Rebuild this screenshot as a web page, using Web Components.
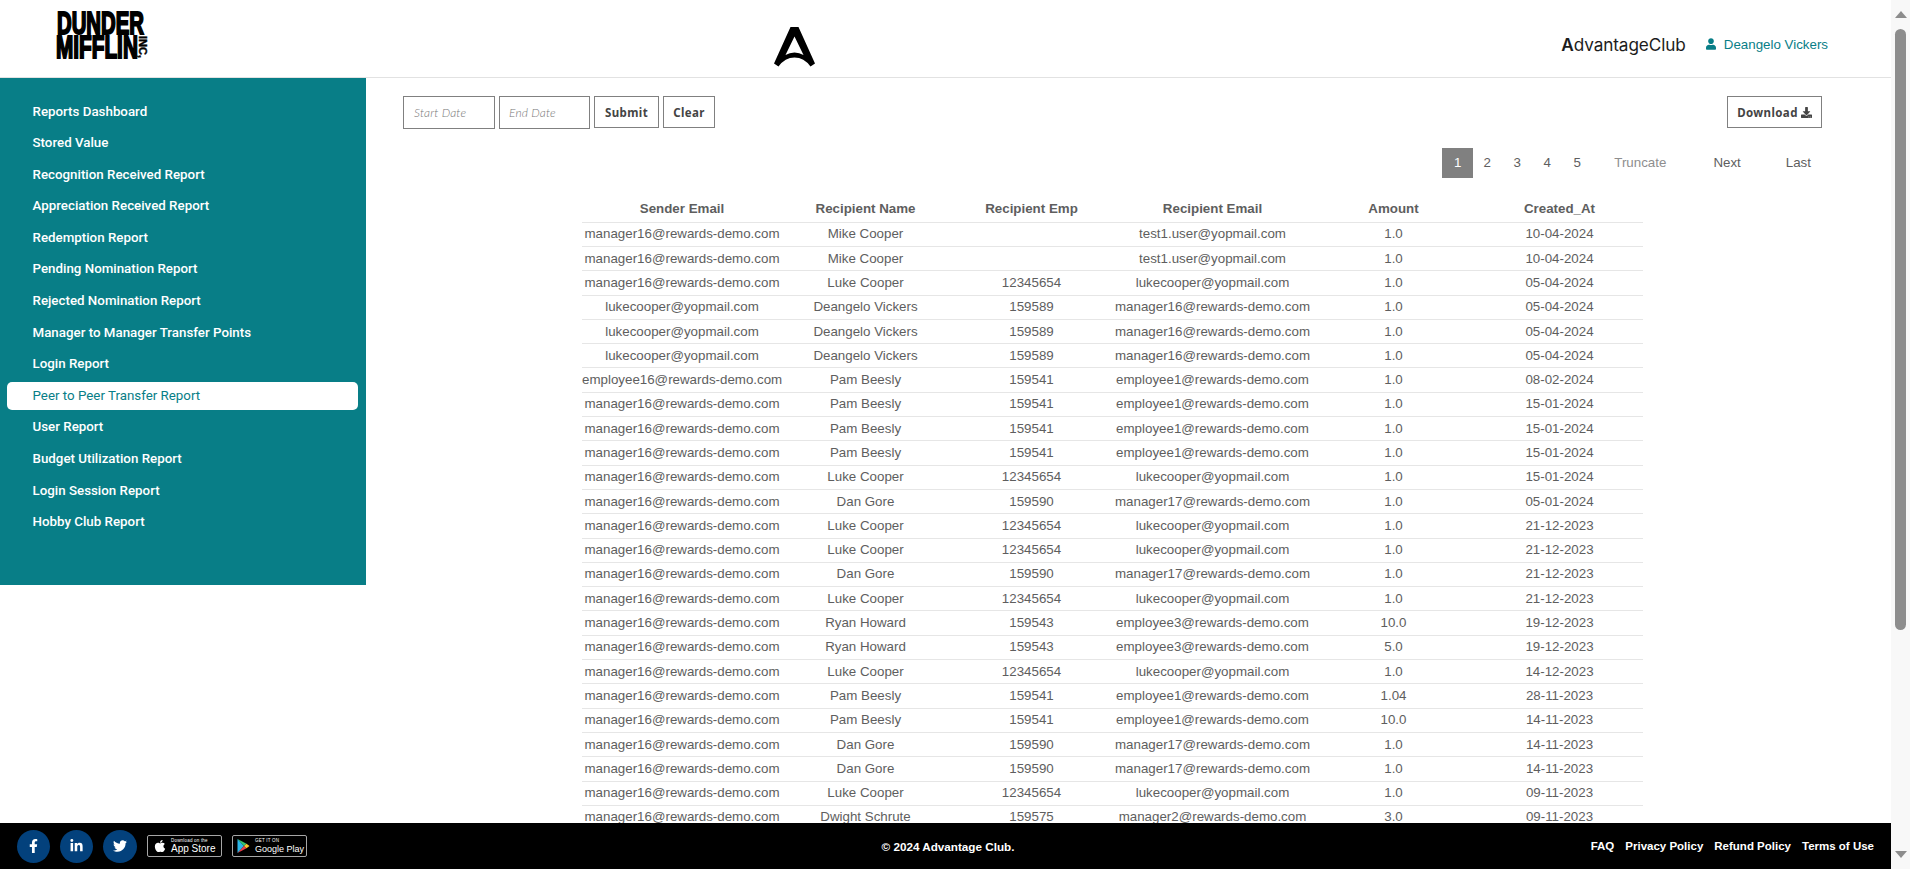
<!DOCTYPE html>
<html lang="en">
<head>
<meta charset="utf-8">
<title>Peer to Peer Transfer Report</title>
<style>
  html, body { margin: 0; height: 100%; overflow: hidden; background: #fff; }
  body { font-family: "Liberation Sans", Arial, sans-serif; }
</style>
</head>
<body>
<app-shell>
  <app-header slot="header"></app-header>
  <side-nav slot="nav"></side-nav>
  <report-toolbar slot="main"></report-toolbar>
  <report-pager slot="main"></report-pager>
  <report-table slot="main"></report-table>
  <app-footer slot="footer"></app-footer>
</app-shell>

<script>
const ICONS = {
  user: ['0 0 448 512', 'M224 256c70.7 0 128-57.3 128-128S294.7 0 224 0 96 57.3 96 128s57.3 128 128 128zm89.6 32h-16.7c-22.2 10.2-46.9 16-72.9 16s-50.6-5.8-72.9-16h-16.7C60.2 288 0 348.2 0 422.4V464c0 26.5 21.5 48 48 48h352c26.5 0 48-21.5 48-48v-41.6c0-74.2-60.2-134.4-134.4-134.4z'],
  download: ['0 0 512 512', 'M216 0h80c13.3 0 24 10.7 24 24v168h87.7c17.8 0 26.7 21.5 14.1 34.1L269.7 378.3c-7.5 7.5-19.8 7.5-27.3 0L90.1 226.1c-12.6-12.6-3.7-34.1 14.1-34.1H192V24c0-13.3 10.7-24 24-24zm296 376v112c0 13.3-10.7 24-24 24H24c-13.3 0-24-10.7-24-24V376c0-13.3 10.7-24 24-24h146.7l49 49c20.1 20.1 52.5 20.1 72.6 0l49-49H488c13.3 0 24 10.7 24 24zm-124 88c0-11-9-20-20-20s-20 9-20 20 9 20 20 20 20-9 20-20zm64 0c0-11-9-20-20-20s-20 9-20 20 9 20 20 20 20-9 20-20z'],
  facebook: ['0 0 320 512', 'M279.14 288l14.22-92.66h-88.91v-60.13c0-25.35 12.42-50.06 52.24-50.06h40.42V6.26S260.43 0 225.36 0c-73.22 0-121.08 44.38-121.08 124.72v70.62H22.89V288h81.39v224h100.17V288z'],
  linkedin: ['0 0 448 512', 'M100.28 448H7.4V148.9h92.88zM53.79 108.1C24.09 108.1 0 83.5 0 53.8a53.79 53.79 0 0 1 107.58 0c0 29.7-24.1 54.3-53.79 54.3zM447.9 448h-92.68V302.4c0-34.7-.7-79.2-48.29-79.2-48.29 0-55.69 37.7-55.69 76.7V448h-92.78V148.9h89.08v40.8h1.3c12.4-23.5 42.69-48.3 87.88-48.3 94 0 111.28 61.9 111.28 142.3V448z'],
  twitter: ['0 0 512 512', 'M459.37 151.716c.325 4.548.325 9.097.325 13.645 0 138.72-105.583 298.558-298.558 298.558-59.452 0-114.68-17.219-161.137-47.106 8.447.974 16.568 1.299 25.34 1.299 49.055 0 94.213-16.568 130.274-44.832-46.132-.975-84.792-31.188-98.112-72.772 6.498.974 12.995 1.624 19.818 1.624 9.421 0 18.843-1.3 27.614-3.573-48.081-9.747-84.143-51.98-84.143-102.985v-1.299c13.969 7.797 30.214 12.67 47.431 13.319-28.264-18.843-46.781-51.005-46.781-87.391 0-19.492 5.197-37.36 14.294-52.954 51.655 63.675 129.3 105.258 216.365 109.807-1.624-7.797-2.599-15.918-2.599-24.04 0-57.828 46.782-104.934 104.934-104.934 30.213 0 57.502 12.67 76.67 33.137 23.715-4.548 46.456-13.32 66.599-25.34-7.798 24.366-24.366 44.833-46.132 57.827 21.117-2.273 41.584-8.122 60.426-16.243-14.292 20.791-32.161 39.308-52.628 54.253z'],
  apple: ['0 0 384 512', 'M318.7 268.7c-.2-36.7 16.4-64.4 50-84.8-18.8-26.9-47.2-41.7-84.7-44.6-35.5-2.8-74.3 20.7-88.5 20.7-15 0-49.4-19.7-76.4-19.7C63.3 141.2 4 184.8 4 273.5q0 39.3 14.4 81.2c12.8 36.7 59 126.7 107.2 125.2 25.2-.6 43-17.9 75.8-17.9 31.8 0 48.3 17.9 76.4 17.9 48.6-.7 90.4-82.5 102.6-119.3-65.2-30.7-61.7-90-61.7-91.9zm-56.6-164.2c27.3-32.4 24.8-61.9 24-72.5-24.1 1.4-52 16.4-67.9 34.9-17.5 19.8-27.8 44.3-25.6 71.9 26.1 2 49.9-11.4 69.5-34.3z']
};

function icon(name, w, h) {
  const [box, d] = ICONS[name];
  return `<svg viewBox="${box}" width="${w}" height="${h}" fill="currentColor" aria-hidden="true"><path d="${d}"/></svg>`;
}

const shellTemplate = document.createElement('template');
shellTemplate.innerHTML = `
  <style>
    :host { display: flex; height: 100vh; }
    .page { flex: 1; min-width: 0; display: flex; flex-direction: column; }
    .body { flex: 1; min-height: 0; display: flex; overflow: hidden; align-items: flex-start; }
    .main { flex: 1; min-width: 0; padding: 18px 69px 0 37px; box-sizing: border-box; }
    .bar { flex: none; width: 19px; background: #f8f8f8; display: flex; flex-direction: column; align-items: center; }
    .up, .down { width: 0; height: 0; border-left: 6px solid transparent; border-right: 6px solid transparent; flex: none; }
    .up { border-bottom: 7px solid #8d8d8d; margin-top: 11px; }
    .thumb { width: 11px; height: 601px; background: #8d8d8d; border-radius: 6px; margin-top: 11px; flex: none; }
    .down { border-top: 7px solid #8d8d8d; margin-top: auto; margin-bottom: 11px; }
  </style>
  <div class="page">
    <slot name="header"></slot>
    <div class="body">
      <slot name="nav"></slot>
      <div class="main"><slot name="main"></slot></div>
    </div>
    <slot name="footer"></slot>
  </div>
  <div class="bar"><div class="up"></div><div class="thumb"></div><div class="down"></div></div>
`;

class AppShell extends HTMLElement {
  constructor() {
    super();
    this.attachShadow({ mode: 'open' }).appendChild(shellTemplate.content.cloneNode(true));
  }
}

const headerTemplate = document.createElement('template');
headerTemplate.innerHTML = `
  <style>
    :host { display: block; flex: none; }
    header { height: 77px; border-bottom: 1px solid #e2e2e2; display: grid; grid-template-columns: 774px auto 1fr; background: #fff; }
    .logo { display: block; margin: 8px 0 0 54px; overflow: visible; }
    .mark { display: block; margin-top: 27px; }
    .right { display: flex; justify-content: flex-end; align-items: center; padding: 11px 63px 0 0; }
    .brand { font: 400 17.2px Inter, "Liberation Sans", sans-serif; color: #1c1c1c; letter-spacing: -.1px; margin-right: 20px; }
    .brand b { font-weight: 600; }
    .user { display: flex; align-items: center; gap: 8px; color: #087e87; font: 13.33px "Liberation Sans", Arial, sans-serif; }
  </style>
  <header>
    <svg class="logo" width="98" height="60" viewBox="0 0 98 60">
      <g font-family="'Liberation Sans', Arial, sans-serif" font-weight="700" font-size="31" fill="#000" stroke="#000" stroke-width="2">
        <text transform="translate(3 25.5) scale(.656 1)">DUNDER</text>
        <text transform="translate(2 49.5) scale(.67 1)">MIFFLIN</text>
      </g>
      <text transform="translate(85 28) rotate(90)" font-family="'Liberation Sans', Arial, sans-serif" font-weight="700" font-size="11" stroke="#000" stroke-width=".4">INC,</text>
    </svg>
    <svg class="mark" width="41" height="40" viewBox="0 0 41 40"><path fill="#000" fill-rule="evenodd" d="M16.5 0H24.5L41 36.5 36.5 39.5Q30 30.5 20.5 30.5 11 30.5 4.5 39.5L0 36.5ZM20.5 9.5 11.5 28Q15.5 25.5 20.5 25.5 25.5 25.5 29.5 28Z"/></svg>
    <div class="right">
      <span class="brand"><b>A</b>dvantageClub</span>
      <span class="user" id="user"></span>
    </div>
  </header>
`;

class AppHeader extends HTMLElement {
  constructor() {
    super();
    this.attachShadow({ mode: 'open' }).appendChild(headerTemplate.content.cloneNode(true));
    this.shadowRoot.getElementById('user').innerHTML = icon('user', 10, 12) + '<span>Deangelo Vickers</span>';
  }
}

const NAV_ITEMS = [
  'Reports Dashboard', 'Stored Value', 'Recognition Received Report', 'Appreciation Received Report',
  'Redemption Report', 'Pending Nomination Report', 'Rejected Nomination Report',
  'Manager to Manager Transfer Points', 'Login Report', 'Peer to Peer Transfer Report', 'User Report',
  'Budget Utilization Report', 'Login Session Report', 'Hobby Club Report'
];

const navTemplate = document.createElement('template');
navTemplate.innerHTML = `
  <style>
    :host { display: block; flex: none; width: 366px; }
    nav { background: #087e87; height: 507px; box-sizing: border-box; padding: 19.5px 8px 0 7px; display: flex; flex-direction: column; gap: 3.6px; }
    a { display: block; height: 28px; padding-left: 25.5px; color: #fff; font: 500 13.33px/28px Roboto, "Liberation Sans", sans-serif; border-radius: 5px; text-decoration: none; }
    a.active { background: #fff; color: #087e87; font-weight: 400; }
  </style>
  <nav></nav>
`;

class SideNav extends HTMLElement {
  constructor() {
    super();
    this.attachShadow({ mode: 'open' }).appendChild(navTemplate.content.cloneNode(true));
    const nav = this.shadowRoot.querySelector('nav');
    for (const label of NAV_ITEMS) {
      const a = document.createElement('a');
      a.href = '#';
      a.textContent = label;
      if (label === 'Peer to Peer Transfer Report') a.classList.add('active');
      nav.appendChild(a);
    }
  }
}

const toolbarTemplate = document.createElement('template');
toolbarTemplate.innerHTML = `
  <style>
    :host { display: flex; align-items: flex-start; gap: 4px; }
    .date { width: 92px; height: 33px; box-sizing: border-box; border: 1px solid #808080; padding: 0 10px; display: flex; align-items: center; color: #777; font: italic 300 12px Lato, "Open Sans", sans-serif; letter-spacing: .15px; }
    .date + .date { width: 91px; padding-left: 9px; }
    button { height: 32px; box-sizing: border-box; border: 1px solid #808080; background: #fff; color: #444; font: 700 11.5px "Noto Sans", "Open Sans", sans-serif; letter-spacing: .4px; padding: 0; display: inline-flex; align-items: center; justify-content: center; gap: 3px; }
    .submit { width: 65px; }
    .clear { width: 52px; }
    .download { width: 95px; margin-left: auto; }
  </style>
  <span class="date">Start Date</span>
  <span class="date">End Date</span>
  <button class="submit">Submit</button>
  <button class="clear">Clear</button>
  <button class="download" id="dl">Download</button>
`;

class ReportToolbar extends HTMLElement {
  constructor() {
    super();
    this.attachShadow({ mode: 'open' }).appendChild(toolbarTemplate.content.cloneNode(true));
    this.shadowRoot.getElementById('dl').insertAdjacentHTML('beforeend', icon('download', 11, 11));
  }
}

const pagerTemplate = document.createElement('template');
pagerTemplate.innerHTML = `
  <style>
    :host { display: flex; justify-content: flex-end; align-items: center; margin-top: 19px; height: 30px; padding-right: 11px; font-size: 13.33px; color: #5e5e5e; }
    span { display: block; line-height: 30px; text-align: center; }
    .n { width: 30px; }
    .on { width: 31px; background: #808080; color: #fff; margin-right: -1px; }
    .t { color: #8e8e8e; margin-left: 22px; }
    .next { margin-left: 47px; }
    .last { margin-left: 45px; }
  </style>
  <span class="on">1</span><span class="n">2</span><span class="n">3</span><span class="n">4</span><span class="n">5</span>
  <span class="t">Truncate</span><span class="next">Next</span><span class="last">Last</span>
`;

class ReportPager extends HTMLElement {
  constructor() {
    super();
    this.attachShadow({ mode: 'open' }).appendChild(pagerTemplate.content.cloneNode(true));
  }
}

const M16 = 'manager16@rewards-demo.com', LUKE = 'lukecooper@yopmail.com', M17 = 'manager17@rewards-demo.com',
  E1 = 'employee1@rewards-demo.com', E3 = 'employee3@rewards-demo.com', T1 = 'test1.user@yopmail.com';

const REPORT_ROWS = [
  [M16, 'Mike Cooper', '', T1, '1.0', '10-04-2024'],
  [M16, 'Mike Cooper', '', T1, '1.0', '10-04-2024'],
  [M16, 'Luke Cooper', '12345654', LUKE, '1.0', '05-04-2024'],
  [LUKE, 'Deangelo Vickers', '159589', M16, '1.0', '05-04-2024'],
  [LUKE, 'Deangelo Vickers', '159589', M16, '1.0', '05-04-2024'],
  [LUKE, 'Deangelo Vickers', '159589', M16, '1.0', '05-04-2024'],
  ['employee16@rewards-demo.com', 'Pam Beesly', '159541', E1, '1.0', '08-02-2024'],
  [M16, 'Pam Beesly', '159541', E1, '1.0', '15-01-2024'],
  [M16, 'Pam Beesly', '159541', E1, '1.0', '15-01-2024'],
  [M16, 'Pam Beesly', '159541', E1, '1.0', '15-01-2024'],
  [M16, 'Luke Cooper', '12345654', LUKE, '1.0', '15-01-2024'],
  [M16, 'Dan Gore', '159590', M17, '1.0', '05-01-2024'],
  [M16, 'Luke Cooper', '12345654', LUKE, '1.0', '21-12-2023'],
  [M16, 'Luke Cooper', '12345654', LUKE, '1.0', '21-12-2023'],
  [M16, 'Dan Gore', '159590', M17, '1.0', '21-12-2023'],
  [M16, 'Luke Cooper', '12345654', LUKE, '1.0', '21-12-2023'],
  [M16, 'Ryan Howard', '159543', E3, '10.0', '19-12-2023'],
  [M16, 'Ryan Howard', '159543', E3, '5.0', '19-12-2023'],
  [M16, 'Luke Cooper', '12345654', LUKE, '1.0', '14-12-2023'],
  [M16, 'Pam Beesly', '159541', E1, '1.04', '28-11-2023'],
  [M16, 'Pam Beesly', '159541', E1, '10.0', '14-11-2023'],
  [M16, 'Dan Gore', '159590', M17, '1.0', '14-11-2023'],
  [M16, 'Dan Gore', '159590', M17, '1.0', '14-11-2023'],
  [M16, 'Luke Cooper', '12345654', LUKE, '1.0', '09-11-2023'],
  [M16, 'Dwight Schrute', '159575', 'manager2@rewards-demo.com', '3.0', '09-11-2023']
];

const tableTemplate = document.createElement('template');
tableTemplate.innerHTML = `
  <style>
    :host { display: block; margin: 18px 0 0 179px; width: 1061px; color: #5e5e5e; font-size: 13.33px; }
    .row { display: grid; grid-template-columns: 200px 167px 165px 197px 165px 167px; height: 24.3px; box-sizing: border-box; padding-bottom: 1px; border-bottom: 1px solid #e6e6e6; align-items: center; text-align: center; white-space: nowrap; }
    .head { font-weight: 700; height: 26.7px; padding-bottom: 0; }
  </style>
  <div role="table" id="t"></div>
`;

class ReportTable extends HTMLElement {
  constructor() {
    super();
    this.attachShadow({ mode: 'open' }).appendChild(tableTemplate.content.cloneNode(true));
    this._columns = ['Sender Email', 'Recipient Name', 'Recipient Emp', 'Recipient Email', 'Amount', 'Created_At'];
    this._rows = REPORT_ROWS;
  }

  connectedCallback() {
    this._render();
  }

  _render() {
    const cells = vals => vals.map(v => `<span>${v}</span>`).join('');
    let html = `<div class="row head" role="row">${cells(this._columns)}</div>`;
    for (const r of this._rows) html += `<div class="row" role="row">${cells(r)}</div>`;
    this.shadowRoot.getElementById('t').innerHTML = html;
  }
}

const footerTemplate = document.createElement('template');
footerTemplate.innerHTML = `
  <style>
    :host { display: block; flex: none; }
    footer { height: 46px; background: #000; color: #fff; display: grid; grid-template-columns: 1fr auto 1fr; align-items: center; font: 700 11.5px "Liberation Sans", Arial, sans-serif; }
    .left { display: flex; align-items: center; padding-left: 17px; }
    .soc { width: 33px; height: 33px; border-radius: 50%; background: #03417c; display: flex; align-items: center; justify-content: center; margin-right: 10px; color: #fff; }
    .soc.tw { width: 34px; }
    .badge { width: 75px; height: 22px; box-sizing: border-box; border: 1px solid #a6a6a6; border-radius: 2px; display: flex; align-items: center; color: #fff; font-weight: 400; margin-right: 10px; }
    .badge svg { flex: none; }
    .badge .txt { display: flex; flex-direction: column; white-space: nowrap; }
    .small { font-size: 4.5px; line-height: 6px; letter-spacing: .2px; }
    .big { font-size: 10px; line-height: 10px; }
    .gp { font-size: 9px; }
    .center { padding-left: 5px; font-size: 11.7px; }
    .links { display: flex; justify-content: flex-end; gap: 11px; padding-right: 17px; }
  </style>
  <footer>
    <div class="left" id="left"></div>
    <div class="center">© 2024 Advantage Club.</div>
    <div class="links"><span>FAQ</span><span>Privacy Policy</span><span>Refund Policy</span><span>Terms of Use</span></div>
  </footer>
`;

class AppFooter extends HTMLElement {
  constructor() {
    super();
    this.attachShadow({ mode: 'open' }).appendChild(footerTemplate.content.cloneNode(true));
    this.shadowRoot.getElementById('left').innerHTML = `
      <span class="soc">${icon('facebook', 9, 14)}</span>
      <span class="soc">${icon('linkedin', 13, 14)}</span>
      <span class="soc tw">${icon('twitter', 14, 14)}</span>
      <span class="badge">
        <span style="margin:0 5px 0 6px;display:flex">${icon('apple', 12, 14)}</span>
        <span class="txt"><span class="small">Download on the</span><span class="big">App Store</span></span>
      </span>
      <span class="badge">
        <svg style="margin:0 5px 0 4px" width="13" height="14" viewBox="0 0 12 14"><polygon points="0,0 6.5,7 0,14" fill="#2bb6e8"/><polygon points="0,0 9,4.8 6.5,7" fill="#35c46f"/><polygon points="0,14 9,9.2 6.5,7" fill="#ea3f4b"/><polygon points="9,4.8 12,7 9,9.2 6.5,7" fill="#f8c42d"/></svg>
        <span class="txt"><span class="small">GET IT ON</span><span class="big gp">Google Play</span></span>
      </span>`;
  }
}

customElements.define('app-shell', AppShell);
customElements.define('app-header', AppHeader);
customElements.define('side-nav', SideNav);
customElements.define('report-toolbar', ReportToolbar);
customElements.define('report-pager', ReportPager);
customElements.define('report-table', ReportTable);
customElements.define('app-footer', AppFooter);
</script>
</body>
</html>
